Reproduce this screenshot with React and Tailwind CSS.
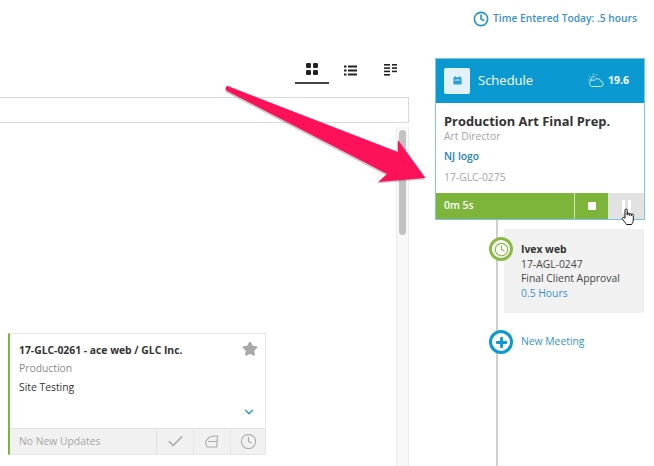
import React from "react";
import { Clock, Check, ChevronDown, Star, Plus } from "lucide-react";

function Cloud() {
  return (
    <svg width="16" height="15" viewBox="0 0 16 15" fill="none" stroke="white" strokeWidth="0.8">
      <path d="M3.500 13.500h9a2.500 2.500 0 0 0 .4-5 3.600 3.600 0 0 0-6.600-1.200 3.100 3.100 0 0 0-2.800 6.200z" />
      <path d="M3.200 7.500a2.800 2.800 0 0 1 3.600-3.700M5 .8l.6 1.400M1 3l1.200.9M.2 7h1.400M8.800 1l-.6 1.300" />
    </svg>
  );
}

function GridIcon() {
  return (
    <svg width="12" height="12" viewBox="0 0 12 12" fill="#222">
      <rect x="0" y="0" width="5" height="5" rx="1.2" />
      <rect x="7" y="0" width="5" height="5" rx="1.2" />
      <rect x="0" y="7" width="5" height="5" rx="1.2" />
      <rect x="7" y="7" width="5" height="5" rx="1.2" />
    </svg>
  );
}

function ListIcon() {
  return (
    <svg width="13" height="11" viewBox="0 0 13 11" fill="#222">
      <rect x="0" y="0.500" width="2.500" height="2" />
      <rect x="4" y="0.500" width="9" height="2" />
      <rect x="0" y="4.500" width="2.500" height="2" />
      <rect x="4" y="4.500" width="9" height="2" />
      <rect x="0" y="8.500" width="2.500" height="2" />
      <rect x="4" y="8.500" width="9" height="2" />
    </svg>
  );
}

function DetailIcon() {
  return (
    <svg width="13" height="12" viewBox="0 0 13 12" fill="#222">
      <rect x="0" y="0" width="6" height="1.600" />
      <rect x="0" y="3.300" width="6" height="1.600" />
      <rect x="0" y="6.600" width="6" height="1.600" />
      <rect x="0" y="10" width="6" height="1.600" />
      <rect x="8" y="0" width="5" height="1.600" />
      <rect x="8" y="3.300" width="5" height="1.600" />
      <rect x="8" y="6.600" width="5" height="1.600" />
    </svg>
  );
}

function Hand() {
  return (
    <svg width="14" height="18" viewBox="0 0 14 18" fill="white" stroke="#111" strokeWidth="1" strokeLinejoin="round">
      <path d="M4 10V2.200a1.100 1.100 0 0 1 2.200 0V7l0-1.200a1.100 1.100 0 0 1 2.100 0V7.500l0-1a1 1 0 0 1 2 0v1.200l0-.6a1 1 0 0 1 2 0V12c0 2-1 3-1.600 4.500H5.500C4.500 15 3.200 13.500 1.500 11.200c-.8-1.200.8-2.300 1.600-1.300z" />
    </svg>
  );
}

const ARROW = "M226 87 Q227 85.500 229 86.500 L398 152 L398 140 L425.500 178 L378 182 L387 174 L227 91 Q225 89 226 87z";

function Arrow() {
  return (
    <svg className="absolute left-0 top-0 pointer-events-none" width="654" height="466" viewBox="0 0 654 466">
      <path d={ARROW} fill="#555" opacity="0.3" transform="translate(-1 1.500)" />
      <path d={ARROW} fill="#fd1159" />
    </svg>
  );
}

function ProjectCard() {
  return (
    <div className="ml-2 w-[258px] h-[122px] flex flex-col bg-white border border-[#e6e6e6] border-l-2 border-l-[#7db53a]">
      <div className="relative flex-1 pl-[9px] pt-[8px]">
        <div className="text-[10.35px] leading-[16px] font-bold text-[#333]">17-GLC-0261 - ace web / GLC Inc.</div>
        <div className="text-[10.35px] leading-[16px] mt-[2px] text-[#8a8a8a]">Production</div>
        <div className="text-[10.35px] leading-[16px] mt-[3px] text-[#333]">Site Testing</div>
        <Star className="absolute right-[7px] top-[7px]" size={16} fill="#a9a9a9" stroke="#a9a9a9" />
        <ChevronDown className="absolute right-[9px] bottom-[9px]" size={14} stroke="#1d9bd1" strokeWidth={2.4} />
      </div>
      <div className="h-[26px] flex items-stretch bg-[#f1f1f1] border-t border-[#e3e3e3]">
        <div className="flex-1 pl-[9px] flex items-center text-[10.35px] text-[#a6a6a6]">No New Updates</div>
        <div className="w-[37px] flex items-center justify-center border-l border-[#e3e3e3]">
          <Check size={19} stroke="#a9a9a9" strokeWidth={2} />
        </div>
        <div className="w-[37px] flex items-center justify-center border-l border-[#e3e3e3]">
          <svg width="14" height="13" viewBox="0 0 14 13" fill="none" stroke="#a9a9a9" strokeWidth="1.1">
            <path d="M1 6 L4.500 2 Q8 .8 12.500 1 L11.800 12 L2.800 12 C1.200 12 .5 8 1 6z M3 6.500 L12 6.500" />
          </svg>
        </div>
        <div className="w-[35px] flex items-center justify-center border-l border-[#e3e3e3]">
          <Clock size={17} stroke="#a9a9a9" strokeWidth={1.5} />
        </div>
      </div>
    </div>
  );
}

function ScheduleCard() {
  return (
    <div className="w-[210px] h-[162px] flex flex-col border border-[#7cc6e3] bg-white">
      <div className="h-[44px] shrink-0 bg-[#0a99d1] flex items-center pl-[8px] pr-[15px] pb-[1px] text-white">
        <div className="w-[26px] h-[26px] rounded-[2px] bg-[#e3f2f9] flex items-center justify-center">
          <svg width="9" height="9" viewBox="0 0 10 10" fill="#2a9fd0">
            <path d="M0.500 1.500h9v8h-9z M2 0h1v2H2z M7 0h1v2H7z" />
            <rect x="2" y="4" width="6" height="1" fill="#e3f2f9" />
          </svg>
        </div>
        <span className="ml-[8px] text-[13px] flex-1">Schedule</span>
        <Cloud />
        <span className="ml-[4px] text-[10.5px] font-bold">19.6</span>
      </div>
      <div className="flex-1 pl-[8px] pt-[9px]">
        <div className="text-[12.9px] leading-[18px] font-bold text-[#333]">Production Art Final Prep.</div>
        <div className="text-[10.35px] leading-[14px] mt-[-1px] text-[#a6a6a6]">Art Director</div>
        <div className="text-[10.35px] leading-[14px] mt-[6px] font-semibold text-[#2282b8]">NJ logo</div>
        <div className="text-[10.35px] leading-[14px] mt-[7px] text-[#a6a6a6]">17-GLC-0275</div>
      </div>
      <div className="h-[26px] shrink-0 flex bg-[#7db53a] text-white">
        <div className="flex-1 pl-[8px] flex items-center text-[10.35px] font-semibold">0m 5s</div>
        <div className="w-[34px] flex items-center justify-center border-l border-[#cfe3b5]">
          <div className="w-[8px] h-[8px] bg-white rounded-[1px]" />
        </div>
        <div className="relative w-[36px] bg-[#e2e2e2] flex items-center justify-center gap-[3px]">
          <div className="w-[3px] h-[13px] bg-white" />
          <div className="w-[3px] h-[13px] bg-white" />
          <div className="absolute left-[13px] top-[15px]">
            <Hand />
          </div>
        </div>
      </div>
    </div>
  );
}

function Timeline() {
  return (
    <div className="relative flex-1">
      <div className="absolute left-[61px] top-0 bottom-0 w-[2px] bg-[#cfcfcf]" />
      <div className="relative ml-[69px] mt-[9px] w-[140px] h-[84px] bg-[#f1f1f1] pl-[17px] pt-[13px] text-[10.35px] leading-[14.6px] text-[#444]">
        <div className="font-bold text-[#333]">Ivex web</div>
        <div>17-AGL-0247</div>
        <div>Final Client Approval</div>
        <div className="text-[#3b92c8]">0.5 Hours</div>
        <div className="absolute left-[-15px] top-[8px] w-[24px] h-[24px] rounded-full bg-white border-[3px] border-[#8ab944] flex items-center justify-center">
          <Clock size={15} stroke="#8ab944" strokeWidth={2} />
        </div>
      </div>
      <div className="relative ml-[54px] mt-[17px] flex items-center">
        <div className="w-[24px] h-[24px] rounded-full bg-white border-[3px] border-[#0a99d1] flex items-center justify-center">
          <Plus size={15} stroke="#0a99d1" strokeWidth={4.5} />
        </div>
        <span className="ml-[8px] text-[10.35px] text-[#3b92c8]">New Meeting</span>
      </div>
    </div>
  );
}

export default function App() {
  return (
    <div className="relative w-[654px] h-[466px] overflow-hidden bg-white font-['Open_Sans',sans-serif]">
      <div className="h-[58px] flex justify-end pr-[17px] pt-[11px]">
        <div className="flex items-center h-[16px] text-[10.25px] font-semibold text-[#3b92c8]">
          <Clock size={16} stroke="#1d93c8" strokeWidth={2.4} />
          <span className="ml-[4px]">Time Entered Today: .5 hours</span>
        </div>
      </div>
      <div className="flex h-[408px]">
        <div className="w-[435px] shrink-0 flex flex-col">
          <div className="h-[26px] w-[410px] flex justify-end pr-[3px]">
            <div className="w-[34px] h-[26px] mr-[4px] border-b-2 border-[#444] flex items-center justify-center pb-[2px]">
              <GridIcon />
            </div>
            <div className="w-[34px] flex items-center justify-center pb-[2px] mr-[6px]">
              <ListIcon />
            </div>
            <div className="w-[34px] flex items-center justify-center pb-[2px]">
              <DetailIcon />
            </div>
          </div>
          <div className="mt-[13px] w-[409px] h-[26px] bg-white border border-[#d9d9d9] border-l-0" />
          <div className="flex mt-[4px] flex-1 w-[409px]">
            <div className="flex-1 flex flex-col justify-end pb-[11px]">
              <ProjectCard />
            </div>
            <div className="w-[13px] bg-[#f8f8f8] border-x border-[#ececec] pt-[3px] flex justify-center">
              <div className="w-[7px] h-[105px] rounded-full bg-[#c2c2c2]" />
            </div>
          </div>
        </div>
        <div className="flex-1 flex flex-col">
          <ScheduleCard />
          <Timeline />
        </div>
      </div>
      <Arrow />
    </div>
  );
}
